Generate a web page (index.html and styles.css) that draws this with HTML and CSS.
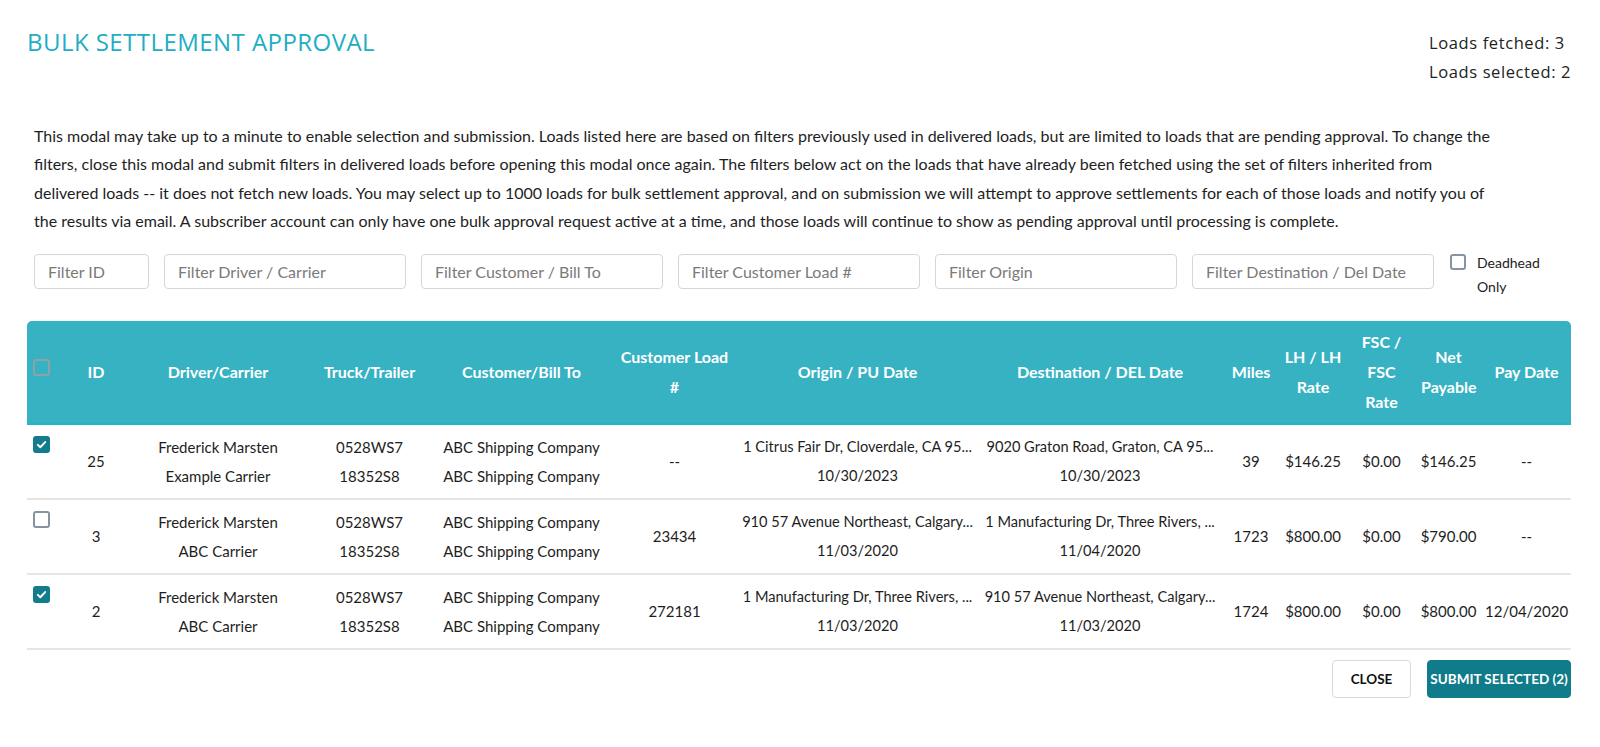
FILE: index.html
```html
<!DOCTYPE html>
<html lang="en">
<head>
  <meta charset="UTF-8">
  <title>Bulk Settlement Approval</title>
  <link rel="stylesheet" href="styles.css">
</head>
<body>
  <div class="modal">
    <div class="modal-head">
      <h1 class="title">BULK SETTLEMENT APPROVAL</h1>
      <div class="counts">
        <div>Loads fetched: 3</div>
        <div>Loads selected: 2</div>
      </div>
    </div>

    <p class="intro">This modal may take up to a minute to enable selection and submission. Loads listed here are based on filters previously used in delivered loads, but are limited to loads that are pending approval. To change the<br>filters, close this modal and submit filters in delivered loads before opening this modal once again. The filters below act on the loads that have already been fetched using the set of filters inherited from<br>delivered loads -- it does not fetch new loads. You may select up to 1000 loads for bulk settlement approval, and on submission we will attempt to approve settlements for each of those loads and notify you of<br>the results via email. A subscriber account can only have one bulk approval request active at a time, and those loads will continue to show as pending approval until processing is complete.</p>

    <div class="filters">
      <input class="filter filter-id" type="text" placeholder="Filter ID">
      <input class="filter" type="text" placeholder="Filter Driver / Carrier">
      <input class="filter" type="text" placeholder="Filter Customer / Bill To">
      <input class="filter" type="text" placeholder="Filter Customer Load #">
      <input class="filter" type="text" placeholder="Filter Origin">
      <input class="filter" type="text" placeholder="Filter Destination / Del Date">
      <label class="deadhead">
        <span class="box"></span>
        <span>Deadhead<br>Only</span>
      </label>
    </div>

    <table class="loads">
      <colgroup>
        <col style="width:35px"><col style="width:68px"><col style="width:176px"><col style="width:127px">
        <col style="width:177px"><col style="width:129px"><col style="width:237px"><col style="width:248px">
        <col style="width:54px"><col style="width:70px"><col style="width:67px"><col style="width:67px"><col style="width:89px">
      </colgroup>
      <thead>
        <tr>
          <th class="check"><span class="box box-head"></span></th>
          <th>ID</th>
          <th>Driver/Carrier</th>
          <th>Truck/Trailer</th>
          <th>Customer/Bill To</th>
          <th>Customer Load #</th>
          <th>Origin / PU Date</th>
          <th>Destination / DEL Date</th>
          <th>Miles</th>
          <th>LH / LH Rate</th>
          <th>FSC / FSC Rate</th>
          <th>Net Payable</th>
          <th>Pay Date</th>
        </tr>
      </thead>
      <tbody>
        <tr>
          <td class="check"><span class="box checked"><svg viewBox="0 0 16 16"><path d="M3.5 8.4l3 3 6-6.4" /></svg></span></td>
          <td>25</td>
          <td>Frederick Marsten<br>Example Carrier</td>
          <td>0528WS7<br>18352S8</td>
          <td>ABC Shipping Company<br>ABC Shipping Company</td>
          <td>--</td>
          <td class="place">1 Citrus Fair Dr, Cloverdale, CA 95...<br>10/30/2023</td>
          <td class="place">9020 Graton Road, Graton, CA 95...<br>10/30/2023</td>
          <td>39</td>
          <td>$146.25</td>
          <td>$0.00</td>
          <td>$146.25</td>
          <td>--</td>
        </tr>
        <tr>
          <td class="check"><span class="box"></span></td>
          <td>3</td>
          <td>Frederick Marsten<br>ABC Carrier</td>
          <td>0528WS7<br>18352S8</td>
          <td>ABC Shipping Company<br>ABC Shipping Company</td>
          <td>23434</td>
          <td class="place">910 57 Avenue Northeast, Calgary...<br>11/03/2020</td>
          <td class="place">1 Manufacturing Dr, Three Rivers, ...<br>11/04/2020</td>
          <td>1723</td>
          <td>$800.00</td>
          <td>$0.00</td>
          <td>$790.00</td>
          <td>--</td>
        </tr>
        <tr>
          <td class="check"><span class="box checked"><svg viewBox="0 0 16 16"><path d="M3.5 8.4l3 3 6-6.4" /></svg></span></td>
          <td>2</td>
          <td>Frederick Marsten<br>ABC Carrier</td>
          <td>0528WS7<br>18352S8</td>
          <td>ABC Shipping Company<br>ABC Shipping Company</td>
          <td>272181</td>
          <td class="place">1 Manufacturing Dr, Three Rivers, ...<br>11/03/2020</td>
          <td class="place">910 57 Avenue Northeast, Calgary...<br>11/03/2020</td>
          <td>1724</td>
          <td>$800.00</td>
          <td>$0.00</td>
          <td>$800.00</td>
          <td>12/04/2020</td>
        </tr>
      </tbody>
    </table>

    <div class="actions">
      <button class="btn btn-close">CLOSE</button>
      <button class="btn btn-submit">SUBMIT SELECTED (2)</button>
    </div>
  </div>
</body>
</html>
```

FILE: styles.css
```css
body {
  margin: 0;
  background: #fff;
  color: #222;
  font-family: Lato, "Liberation Sans", sans-serif;
}
.modal {
  padding: 26px 29px 40px 27px;
}
.modal-head {
  display: flex;
  justify-content: space-between;
  align-items: flex-start;
}
.title {
  margin: 0;
  font-family: "Open Sans", sans-serif;
  font-weight: 400;
  font-size: 24px;
  line-height: 32px;
  letter-spacing: 0.45px;
  color: #21adc4;
}
.counts {
  margin-top: 2px;
  font-family: "Open Sans", sans-serif;
  font-size: 16.5px;
  line-height: 29px;
  letter-spacing: 0.6px;
  color: #222;
}
.intro {
  margin: 36px 0 0 7px;
  font-size: 16px;
  line-height: 28.3px;
  color: #1e1e1e;
}
.filters {
  display: flex;
  gap: 15px;
  margin: 19px 0 0 7px;
  align-items: flex-start;
}
.filter {
  box-sizing: border-box;
  width: 242px;
  height: 35px;
  padding: 0 13px;
  border: 1px solid #d6d6d6;
  border-radius: 4px;
  font-family: Lato, sans-serif;
  font-size: 16px;
  color: #333;
}
.filter::placeholder {
  color: #7a7a7a;
}
.filter-id {
  width: 115px;
}
.deadhead {
  display: flex;
  gap: 11px;
  margin-left: 1px;
  font-size: 14px;
  line-height: 24px;
  margin-top: -3px;
}
.box {
  box-sizing: border-box;
  display: inline-block;
  width: 17px;
  height: 17px;
  border: 2px solid #8494a2;
  border-radius: 3px;
  background: #fff;
  vertical-align: top;
}
.deadhead .box {
  margin-top: 3px;
  width: 16px;
  height: 16px;
}
.box-head {
  background: transparent;
  border-color: #8fa2a8;
}
.box.checked {
  background: #127c8c;
  border-color: #127c8c;
}
.box svg {
  display: block;
  width: 13px;
  height: 13px;
  fill: none;
  stroke: #fff;
  stroke-width: 2.4;
  stroke-linecap: round;
  stroke-linejoin: round;
}
.loads {
  width: 1544px;
  margin-top: 22px;
  table-layout: fixed;
  border-collapse: separate;
  border-spacing: 0;
}
.loads th {
  background: #37b2c3;
  color: #fff;
  font-weight: 700;
  font-size: 16px;
  line-height: 30px;
  padding: 6px 6px;
  border-bottom: 2px solid #1fb6ca;
  text-align: center;
}
.loads th:first-child {
  border-top-left-radius: 5px;
}
.loads th:last-child {
  border-top-right-radius: 5px;
}
.loads td {
  font-size: 15px;
  line-height: 28.5px;
  padding: 8px 3px;
  text-align: center;
  border-bottom: 2px solid #e6e6e6;
  white-space: nowrap;
  color: #1e1e1e;
}
.loads td.place {
  font-size: 14.6px;
}
.loads th.check,
.loads td.check {
  vertical-align: top;
  text-align: left;
  padding-left: 6px;
}
.loads th.check {
  padding-top: 38px;
}
.loads td.check {
  padding-top: 11px;
}
.actions {
  display: flex;
  justify-content: flex-end;
  gap: 16px;
  margin-top: 10px;
  width: 1544px;
}
.btn {
  height: 38px;
  border-radius: 4px;
  font-family: Lato, sans-serif;
  font-weight: 700;
  font-size: 13.5px;
  white-space: nowrap;
  cursor: pointer;
}
.btn-close {
  width: 79px;
  background: #fff;
  border: 1px solid #d9d9d9;
  color: #111;
}
.btn-submit {
  width: 144px;
  padding: 0;
  background: #107b8a;
  border: 1px solid #107b8a;
  color: #fff;
}
```
